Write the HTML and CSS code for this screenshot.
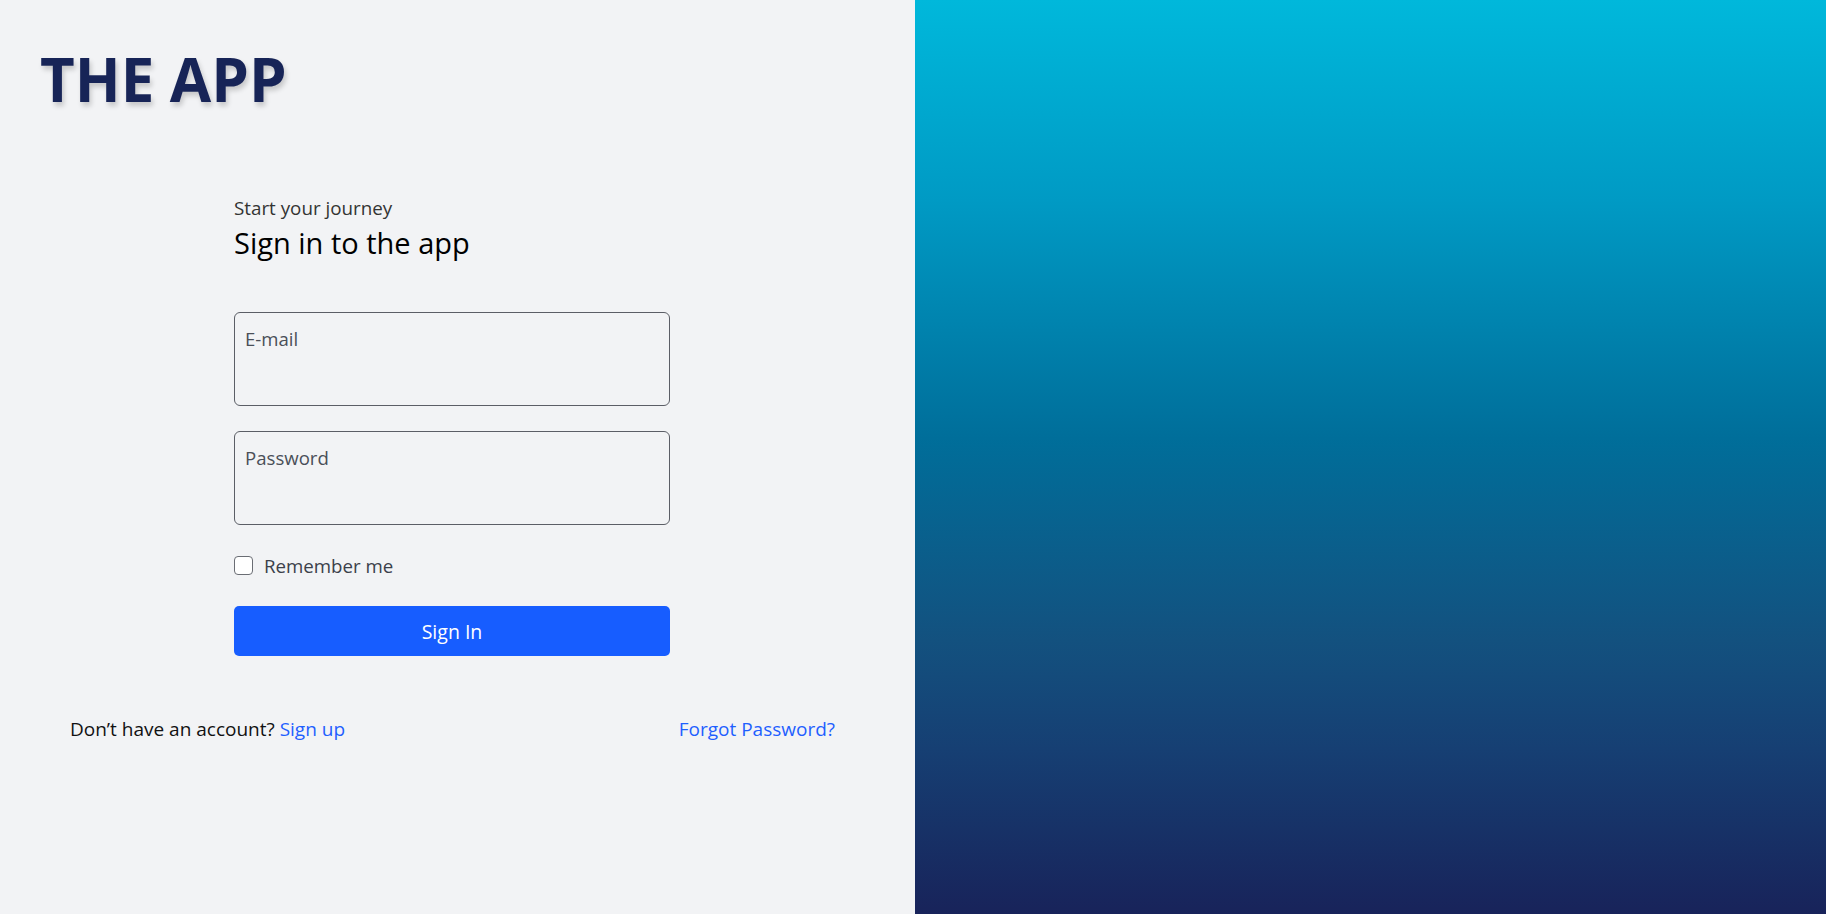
FILE: index.html
```html
<!DOCTYPE html>
<html lang="en">
<head>
<meta charset="utf-8">
<title>The App - Sign in</title>
<link rel="stylesheet" href="styles.css">
</head>
<body>
<div class="page">
  <section class="left">
    <h1 class="logo">THE APP</h1>
    <div class="form-wrap">
      <form class="signin">
        <p class="kicker">Start your journey</p>
        <h2 class="title">Sign in to the app</h2>
        <label class="field">
          <span class="field-label">E-mail</span>
          <input type="email" class="field-input">
        </label>
        <label class="field">
          <span class="field-label">Password</span>
          <input type="password" class="field-input">
        </label>
        <label class="check">
          <input type="checkbox" class="check-box">
          <span>Remember me</span>
        </label>
        <button type="button" class="btn">Sign In</button>
      </form>
    </div>
    <div class="footer">
      <span>Don’t have an account? <a href="#" class="link">Sign up</a></span>
      <a href="#" class="link">Forgot Password?</a>
    </div>
  </section>
  <section class="right"></section>
</div>
</body>
</html>
```

FILE: styles.css
```css
* { box-sizing: border-box; }
html, body { margin: 0; height: 100%; }
body {
  font-family: "Open Sans", "Noto Sans", sans-serif;
  color: #212529;
  background: #f2f3f5;
}
.page {
  display: grid;
  grid-template-columns: 915px 1fr;
  height: 100vh;
}
.left {
  background: #f2f3f5;
  padding: 40px 0 0 40px;
  display: flex;
  flex-direction: column;
}
.logo {
  margin: 0;
  font-size: 60px;
  line-height: 78px;
  font-weight: 700;
  color: #172457;
  letter-spacing: 0;
  text-shadow: 2px 4px 5px rgba(0, 0, 0, 0.18);
}
.form-wrap {
  padding-left: 194px;
  margin-top: 77px;
}
.signin {
  width: 436px;
  display: flex;
  flex-direction: column;
}
.kicker {
  margin: 0;
  font-size: 18.8px;
  line-height: 26px;
  color: #333;
}
.title {
  margin: 4px 0 0;
  font-size: 29px;
  font-weight: 400;
  line-height: 36px;
  color: #000;
}
.field {
  position: relative;
  display: block;
  height: 94px;
  margin-top: 25px;
}
.title + .field { margin-top: 51px; }
.field-label {
  position: absolute;
  left: 11px;
  top: 14px;
  font-size: 18.6px;
  line-height: 26px;
  color: #4a4f58;
  pointer-events: none;
}
.field-input {
  width: 100%;
  height: 100%;
  border: 1px solid #5b5e66;
  border-radius: 6px;
  background: #f2f3f5;
  font: inherit;
  padding: 38px 11px 0;
  outline: none;
}
.check {
  display: flex;
  align-items: center;
  gap: 11px;
  margin-top: 28px;
  font-size: 18.7px;
  line-height: 25px;
  color: #3b404a;
}
.check-box {
  appearance: none;
  -webkit-appearance: none;
  width: 19px;
  height: 19px;
  margin: 0;
  border: 1px solid #6a6d74;
  border-radius: 4px;
  background: #fff;
}
.btn {
  margin-top: 28px;
  height: 50px;
  border: 0;
  border-radius: 5px;
  background: #175dff;
  color: #fff;
  font: inherit;
  font-size: 19.5px;
  cursor: pointer;
}
.footer {
  display: flex;
  justify-content: space-between;
  width: 765px;
  margin: 60px 0 0 30px;
  font-size: 19px;
  line-height: 26px;
  color: #111;
}
.link {
  color: #1f5fff;
  text-decoration: none;
}
.right {
  background: linear-gradient(180deg, #00b8db 0%, #009ac4 22%, #006e9a 48%, #13517f 70%, #163f73 82%, #18235a 100%);
}
```
